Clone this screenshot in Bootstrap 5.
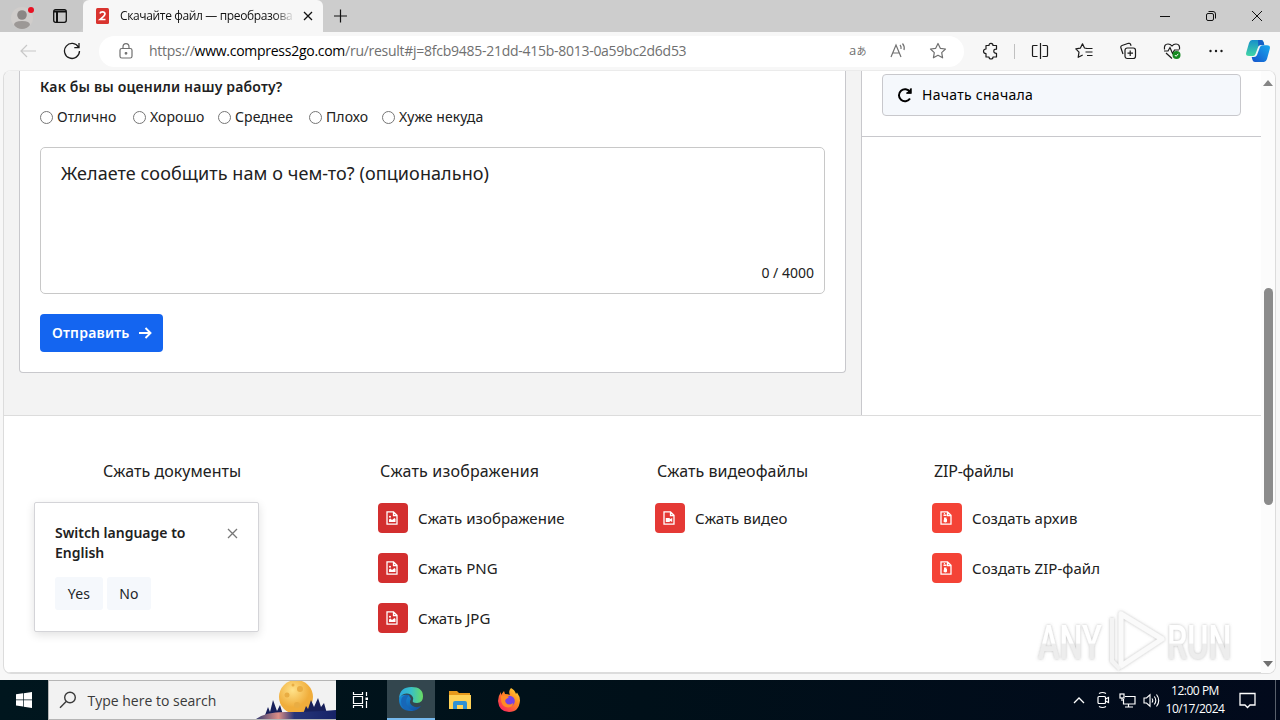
<!DOCTYPE html>
<html lang="ru">
  <head>
    <meta charset="UTF-8" />
    <meta name="viewport" content="width=device-width, initial-scale=1.0" />
    <title>Скачайте файл — преобразование</title>
    <link
      href="https://cdn.jsdelivr.net/npm/bootstrap@5.3.2/dist/css/bootstrap.min.css"
      rel="stylesheet" />
    <style>
      body {
        width: 1280px;
        height: 720px;
        overflow: hidden;
        font-family: "Noto Sans", "Open Sans", sans-serif;
        font-size: 14px;
        line-height: 20px;
        color: #212121;
        background: #f7f7f7;
      }
      svg { display: block; flex: none; }
      svg:not([fill]) { fill: none; }
      svg:not([stroke]) { stroke: currentColor; }
      .ui-font {
        font-family: "Open Sans", "Noto Sans", sans-serif;
      }
      .cell {
        display: flex;
        align-items: center;
        justify-content: center;
        flex: none;
      }
      .cell-44 { width: 44px; }
      .cell-46 { width: 46px; }
      .cell-40 { width: 40px; }
      .cell-24 { width: 24px; }

      /* browser frame */
      .tab-strip { height: 32px; background: #cdcdcd; color: #111; }
      .strip-left {
        width: 83px;
        background: #c8c8c8;
        border-bottom-right-radius: 6px;
      }
      .strip-tab {
        width: 240px;
        background: #f7f7f7;
        border-radius: 6px 6px 0 0;
        padding-left: 13px;
      }
      .tab-title {
        width: 175px;
        margin-left: 11px;
        font-size: 12px;
        letter-spacing: -0.36px;
        -webkit-mask-image: linear-gradient(90deg, #000 88%, transparent 100%);
        mask-image: linear-gradient(90deg, #000 88%, transparent 100%);
      }
      .tool-bar { height: 38px; padding-left: 6px; color: #1b1b1b; }
      .address {
        width: 865px;
        height: 31px;
        margin-left: 5px;
        border-radius: 16px;
        background: #fff;
        color: #707070;
        padding-left: 18px;
        padding-right: 6px;
      }
      .address-url { font-size: 14px; margin-left: 14px; letter-spacing: -0.27px; }
      .address-url b { font-weight: 400; color: #000; }
      .viewport {
        width: 1273px;
        height: 604px;
        margin-left: 3px;
        border: 1px solid #dcdcdc;
        border-top-color: #ebebeb;
        border-radius: 8px;
        background: #fff;
        overflow: hidden;
      }

      /* page */
      .page { width: 1257px; }
      .page-top { height: 345px; background: #f3f3f3; border-bottom: 1px solid #dcdcdc; }
      .main-col { width: 857px; padding-left: 15px; }
      .survey {
        width: 827px;
        height: 302px;
        padding: 6px 20px 0;
        background: #fff;
        border: 1px solid #c8c8cc;
        border-top: 0;
        border-radius: 0 0 4px 4px;
      }
      .survey-title { font-weight: 600; letter-spacing: 0.17px; }
      .survey-options { margin-top: 10px; letter-spacing: 0.08px; }
      .survey-options label { display: flex; align-items: center; gap: 4px; }
      .survey-options input { width: 13px; height: 13px; margin: 0; }
      .comment-box {
        width: 785px;
        height: 147px;
        margin-top: 20px;
        padding: 12px 10px 10px 20px;
        border: 1px solid #c8c8c8;
        border-radius: 5px;
      }
      .comment-hint { font-size: 18px; line-height: 26px; letter-spacing: 0.08px; }
      .btn-send {
        width: 123px;
        height: 38px;
        margin-top: 20px;
        padding: 0 11px 1px 12px;
        border-radius: 4px;
        background: #1465f0;
        color: #fff;
        font-size: 14px;
        font-weight: 600;
        letter-spacing: 0.22px;
      }
      .side-col { width: 400px; background: #fff; border-left: 1px solid #c8c8cc; }
      .side-head { height: 66px; padding: 3px 20px 0; border-bottom: 1px solid #c8c8cc; }
      .btn-restart {
        width: 359px;
        height: 42px;
        padding: 0 0 1px 14px;
        gap: 9px;
        border: 1px solid #c8c8cc;
        border-radius: 4px;
        background: #f5f8fc;
        color: #000;
        font-size: 14px;
        letter-spacing: 0.28px;
      }
      .page-links { height: 257px; padding: 43px 0 0 97px; border-bottom: 1px solid #dcdcdc; }
      .links-col { width: 277px; font-size: 15px; letter-spacing: 0.05px; }
      .links-title { font-size: 16px; line-height: 24px; padding-left: 2px; margin-bottom: 20px; }
      .links-item { height: 30px; margin-bottom: 20px; gap: 10px; }
      .tool-icon { width: 30px; height: 30px; padding: 0 2px 0 0; border-radius: 4px; color: #fff; }
      .red-1 { background: #d32f2f; }
      .red-2 { background: #e53935; }
      .red-3 { background: #f44336; }
      .scroll-track { width: 14px; background: #fcfcfc; padding: 9px 0 6px; }
      .scroll-thumb { width: 9px; height: 217px; margin-top: 202px; border-radius: 5px; background: #8b8b8b; }

      /* popup laid over the page */
      .lang-popup {
        position: absolute;
        left: 34px;
        top: 502px;
        width: 225px;
        height: 130px;
        padding: 20px;
        background: #fff;
        border: 1px solid #d4d4d8;
        border-radius: 2px;
        box-shadow: 0 3px 10px rgba(0, 0, 0, 0.12);
      }
      .lang-popup .btn {
        height: 33px;
        padding: 0;
        border: 0;
        border-radius: 3px;
        background: #f5f8fc;
        font-size: 14px;
        letter-spacing: 0.3px;
      }
      .watermark {
        position: absolute;
        left: 1030px;
        top: 604px;
      }

      /* taskbar */
      .task-bar {
        height: 40px;
        margin-top: 6px;
        background: linear-gradient(90deg, #00161e, #001019 50%, #020a1c);
        color: #fff;
      }
      .task-search {
        width: 288px;
        background: #f2f2f2;
        border: 1px solid #b5b5b5;
        border-width: 1px 0 1px 1px;
        color: #3a3a3a;
        padding-left: 10px;
      }
      .task-search span { font-size: 14px; margin: 2px 0 0 10.5px; white-space: nowrap; }
      .task-active { background: #33464e; border-bottom: 2px solid #76b9ed; }
      .clock { width: 62px; font-size: 12px; line-height: 18px; letter-spacing: -0.48px; }
    </style>
  </head>
  <body>
    <div class="tab-strip d-flex ui-font">
      <div class="strip-left d-flex align-items-center">
        <div class="cell cell-44">
          <svg width="26" height="28" viewBox="0 0 26 28" stroke="none">
            <circle cx="13" cy="16" r="11" fill="#d0cdcb" />
            <circle cx="13" cy="13" r="4.8" fill="#8b8785" />
            <path d="M5 23q0-4 8-4t8 4q-3 4-8 4t-8-4z" fill="#9c9896" />
            <circle cx="22" cy="8" r="3" fill="#e81123" />
          </svg>
        </div>
        <svg class="ms-2" width="16" height="16" viewBox="0 0 16 16" stroke-width="1.3">
          <rect x="1.7" y="1.7" width="12.6" height="12.6" rx="2" />
          <path d="M2 3.5h12M5 4v10" stroke-width="2" />
        </svg>
      </div>
      <div class="strip-tab d-flex align-items-center">
        <svg width="13" height="16" viewBox="0 0 13 16" stroke="none">
          <rect width="13" height="16" rx="1.5" fill="#d9342f" />
          <path d="M4 5.5Q4.300 3.800 6.500 3.800T9 5.800Q9 7.500 4.200 11.500H9.500" fill="none" stroke="#fff" stroke-width="1.700" />
        </svg>
        <div class="tab-title text-nowrap">Скачайте файл — преобразова</div>
        <svg style="margin-left: 8px" width="10" height="10" viewBox="0 0 10 10" stroke-width="1.300">
          <path d="M1 1l8 8M9 1L1 9" />
        </svg>
      </div>
      <svg class="align-self-center ms-2 me-auto" width="18" height="18" viewBox="0 0 18 18" stroke-width="1.200">
        <path d="M9.500 2.500v13M3 9h13" />
      </svg>
      <div class="cell cell-46"><svg width="12" height="12" viewBox="0 0 12 12"><path d="M1 6.500h10" /></svg></div>
      <div class="cell cell-46">
        <svg width="12" height="12" viewBox="0 0 12 12">
          <rect x="1.500" y="3.500" width="7" height="7" rx="1.500" />
          <path d="M3.500 1.500H8q2.500 0 2.500 2.500v4.500" />
        </svg>
      </div>
      <div class="cell cell-46"><svg width="12" height="12" viewBox="0 0 12 12"><path d="M1 1l10 10M11 1L1 11" /></svg></div>
    </div>

    <div class="tool-bar d-flex align-items-center ui-font">
      <div class="cell cell-44">
        <svg width="18" height="14" viewBox="0 0 18 14" stroke="#c8c8c8" stroke-width="1.200"><path d="M17 7H2M8 1L2 7l6 6" /></svg>
      </div>
      <div class="cell cell-44">
        <svg width="18" height="18" viewBox="0 0 18 18" stroke-width="1.300"><path d="M15.500 5.200A7.500 7.500 0 1 0 16.500 9M16 1v4.700h-4.700" /></svg>
      </div>
      <div class="address d-flex align-items-center">
        <svg width="18" height="18" viewBox="0 0 18 18" stroke-width="1.200">
          <rect x="3" y="6.500" width="12" height="9.500" rx="1.800" />
          <path d="M6 6.500V5a3 3.400 0 0 1 6 0v1.500" />
          <circle cx="9" cy="11.300" r=".8" fill="currentColor" />
        </svg>
        <div class="address-url text-nowrap me-auto">https://<b>www.compress2go.com</b>/ru/result#j=8fcb9485-21dd-415b-8013-0a59bc2d6d53</div>
        <div class="cell cell-40">
          <svg width="20" height="18" viewBox="0 0 20 18" stroke="none">
            <text x="1" y="13" font-size="13" font-family="Open Sans" fill="#707070">a</text>
            <text x="8.500" y="13" font-size="10" font-family="Noto Sans CJK JP" fill="#707070">あ</text>
          </svg>
        </div>
        <div class="cell cell-40">
          <svg width="18" height="18" viewBox="0 0 18 18" stroke-width="1.200"><path d="M2 15L7 3l5 12M3.800 11h6.400M11 3q1.500 1.500 1 4M13.500 1.500q2.500 3 1.500 6.500" /></svg>
        </div>
        <div class="cell cell-40">
          <svg width="18" height="18" viewBox="0 0 18 18" stroke-width="1.200" stroke-linejoin="round"><path d="M9 1.500l2.300 4.800 5.200.7-3.800 3.600.9 5.200L9 13.300l-4.600 2.500.9-5.200L1.500 7l5.200-.7z" /></svg>
        </div>
      </div>
      <div class="cell cell-44" style="margin-left: 5px">
        <svg width="18" height="18" viewBox="0 0 18 18" stroke-width="1.200" stroke-linejoin="round">
          <path d="M4 3.500h3q0-2.200 2-2.200t2 2.200h3.500v3.700q-2.700-.2-2.700 2t2.700 2.100V15H11q0 2-2 2t-2-2H4v-3.500q-2.500 0-2.500-2.200T4 7z" />
        </svg>
      </div>
      <div class="vr my-auto" style="height: 15px; margin-left: 1px"></div>
      <div class="cell cell-44" style="margin-left: 3px">
        <svg width="18" height="18" viewBox="0 0 18 18" stroke-width="1.200"><path d="M6.500 3.500h-4q-1 0-1 1v9q0 1 1 1h4M11.500 3.500h4q1 0 1 1v9q0 1-1 1h-4M9.500 1v16" /></svg>
      </div>
      <div class="cell cell-44">
        <svg width="18" height="18" viewBox="0 0 18 18" stroke-width="1.200" stroke-linejoin="round"><path d="M11.500 6.300L9.500 6 7.500 1.800 5.300 6.200l-4.500.6 3.200 3.300-.8 5.200 4.500-2.300M11 6.500h6.500M10.500 10h7M12 13.500h5.500" /></svg>
      </div>
      <div class="cell cell-44">
        <svg width="18" height="18" viewBox="0 0 18 18" stroke-width="1.200">
          <rect x="6" y="6" width="10.500" height="10.500" rx="2.200" />
          <path d="M11.200 8.500v5.500M8.500 11.200H14M4 12L1.800 5.500Q1.500 4 3 3.500L9.500 1.300q1.500-.3 2 1l.6 1.500" />
        </svg>
      </div>
      <div class="cell cell-44">
        <svg width="18" height="18" viewBox="0 0 18 18" stroke-width="1.200">
          <path d="M1.500 7.500Q.8 2 5 2q2.500 0 4 2 1.500-2 4-2 4.200 0 3.500 5.500M1 9h4l2-3.500 2.500 6L11.500 8H16M3 11l6 5.500" />
          <circle cx="13.500" cy="13" r="4" fill="#168a22" stroke="none" />
          <path d="M11.800 13l1.300 1.300 2.200-2.500" stroke="#fff" stroke-width="1" />
        </svg>
      </div>
      <div class="cell cell-44">
        <svg width="16" height="4" viewBox="0 0 16 4" fill="#1b1b1b" stroke="none"><circle cx="2.500" cy="2" r="1.200" /><circle cx="8" cy="2" r="1.200" /><circle cx="13.500" cy="2" r="1.200" /></svg>
      </div>
      <div class="cell cell-40">
        <svg width="24" height="24" viewBox="0 0 24 24" stroke="none">
          <defs>
            <linearGradient id="copA" x1="0" y1="0" x2="0" y2="1"><stop stop-color="#168fca" /><stop offset="1" stop-color="#42d6a5" /></linearGradient>
            <linearGradient id="copB" x1="1" y1="0" x2="0" y2="1"><stop stop-color="#17a9ee" /><stop offset="1" stop-color="#1553cc" /></linearGradient>
          </defs>
          <path d="M6 1h9q2 0 2.500 2l.7 2.500H15q-2 0-2.700 2L9.500 15q-.7 2-2.500 2H3q-4 0-2.600-4L3 4q1-3 3-3z" fill="url(#copA)" />
          <path d="M18 23H9q-2 0-2.500-2l-.8-3H8q2.300 0 3-2L14 8q.7-1.800 2.500-1.800H21q4 0 2.600 4.200L21 20q-1 3-3 3z" fill="url(#copB)" />
          <path d="M12 1h3q2 0 2.500 2l.8 3H15q-2 0-2.700 1.500z" fill="#155fc5" />
        </svg>
      </div>
    </div>

    <div class="viewport d-flex">
      <div class="page flex-shrink-0">
        <div class="page-top d-flex">
          <div class="main-col">
            <form class="survey">
              <div class="survey-title">Как бы вы оценили нашу работу?</div>
              <div class="survey-options d-flex">
                <label style="width: 93px"><input type="radio" name="rate" />Отлично</label>
                <label style="width: 85px"><input type="radio" name="rate" />Хорошо</label>
                <label style="width: 91px"><input type="radio" name="rate" />Среднее</label>
                <label style="width: 73px"><input type="radio" name="rate" />Плохо</label>
                <label><input type="radio" name="rate" />Хуже некуда</label>
              </div>
              <div class="comment-box d-flex flex-column justify-content-between">
                <div class="comment-hint">Желаете сообщить нам о чем-то? (опционально)</div>
                <div class="text-end">0 / 4000</div>
              </div>
              <button type="button" class="btn btn-send d-flex align-items-center justify-content-between border-0">
                Отправить
                <svg width="14" height="14" viewBox="0 0 14 14" stroke-width="1.900"><path d="M1 7h11M7.500 2l5 5-5 5" /></svg>
              </button>
            </form>
          </div>
          <div class="side-col">
            <div class="side-head">
              <button type="button" class="btn btn-restart d-flex align-items-center">
                <svg width="16" height="16" viewBox="0 0 16 16" stroke-width="2"><path d="M13 5A6 6 0 1 0 13 11.500" /><path d="M14.500 1v5.500H9z" fill="currentColor" stroke="none" /><path d="M13.700 1.500v4.500H9.500" stroke-width="1.600" /></svg>
                Начать сначала
              </button>
            </div>
          </div>
        </div>
        <div class="page-links d-flex">
          <div class="links-col">
            <div class="links-title">Сжать документы</div>
          </div>
          <div class="links-col">
            <div class="links-title" style="letter-spacing: 0.2px">Сжать изображения</div>
            <div class="links-item d-flex align-items-center">
              <span class="tool-icon cell red-1"><svg width="12" height="14" viewBox="0 0 12 14"><use href="#fileImage" /></svg></span>Сжать изображение
            </div>
            <div class="links-item d-flex align-items-center">
              <span class="tool-icon cell red-1"><svg width="12" height="14" viewBox="0 0 12 14"><use href="#fileImage" /></svg></span>Сжать PNG
            </div>
            <div class="links-item d-flex align-items-center">
              <span class="tool-icon cell red-1"><svg width="12" height="14" viewBox="0 0 12 14"><use href="#fileImage" /></svg></span>Сжать JPG
            </div>
          </div>
          <div class="links-col">
            <div class="links-title">Сжать видеофайлы</div>
            <div class="links-item d-flex align-items-center">
              <span class="tool-icon cell red-2"><svg width="12" height="14" viewBox="0 0 12 14"><use href="#fileVideo" /></svg></span>Сжать видео
            </div>
          </div>
          <div class="links-col">
            <div class="links-title" style="letter-spacing: -0.2px">ZIP-файлы</div>
            <div class="links-item d-flex align-items-center">
              <span class="tool-icon cell red-3"><svg width="12" height="14" viewBox="0 0 12 14"><use href="#fileZip" /></svg></span>Создать архив
            </div>
            <div class="links-item d-flex align-items-center">
              <span class="tool-icon cell red-3"><svg width="12" height="14" viewBox="0 0 12 14"><use href="#fileZip" /></svg></span>Создать ZIP-файл
            </div>
          </div>
        </div>
      </div>
      <div class="scroll-track d-flex flex-column align-items-center">
        <svg width="10" height="6" viewBox="0 0 10 6" stroke="none"><path d="M0 6l5-6 5 6z" fill="#858585" /></svg>
        <div class="scroll-thumb"></div>
        <svg class="mt-auto" width="10" height="6" viewBox="0 0 10 6" stroke="none"><path d="M0 0l5 6 5-6z" fill="#707070" /></svg>
      </div>
    </div>

    <div class="lang-popup">
      <div class="d-flex justify-content-between">
        <div class="fw-semibold" style="width: 145px">Switch language to English</div>
        <svg style="margin-top: 5px" width="11" height="11" viewBox="0 0 11 11" stroke="#777" stroke-width="1.300"><path d="M1 1l9 9M10 1l-9 9" /></svg>
      </div>
      <div class="d-flex gap-1" style="margin-top: 14px">
        <button type="button" class="btn" style="width: 48px">Yes</button>
        <button type="button" class="btn" style="width: 44px">No</button>
      </div>
    </div>

    <svg class="watermark" width="230" height="74" viewBox="0 0 230 74" stroke="none">
      <defs>
        <filter id="wmShadow" x="-10%" y="-10%" width="120%" height="120%"><feDropShadow dx="0" dy="0" stdDeviation="1.500" flood-color="#777" flood-opacity=".5" /></filter>
        <linearGradient id="wmFill" x1="0" y1="0" x2="0" y2="1"><stop offset=".52" stop-color="#fff" /><stop offset=".54" stop-color="#ededed" /></linearGradient>
      </defs>
      <g filter="url(#wmShadow)">
        <g font-family="Roboto" font-size="49" font-weight="500" fill="url(#wmFill)">
          <text transform="translate(8 55) scale(.66 1)">ANY</text>
          <text transform="translate(137 55) scale(.66 1)">RUN</text>
        </g>
        <path d="M91 10v52l41-27z" fill="none" stroke="#fafafa" stroke-width="5" stroke-linejoin="round" />
        <path d="M82 14v43l8 8" fill="none" stroke="#f4f4f4" stroke-width="4" />
      </g>
    </svg>

    <div class="task-bar d-flex ui-font">
      <div class="cell" style="width: 48px">
        <svg width="16" height="16" viewBox="0 0 16 16" stroke="none"><path d="M0 2.300l7-1v6.300H0zM7.700 1.200L16 0v7.600H7.700zM0 8.300h7v6.300l-7-1zM7.700 8.300H16V16l-8.300-1.200z" fill="#fff" /></svg>
      </div>
      <div class="task-search d-flex align-items-center">
        <svg width="18" height="18" viewBox="0 0 18 18" stroke-width="1.400"><circle cx="11" cy="6.500" r="5.300" /><path d="M7.200 10.500L1 16.800" /></svg>
        <span class="me-auto">Type here to search</span>
        <svg width="80" height="38" viewBox="0 0 80 38" stroke="none">
          <defs>
            <linearGradient id="hillFill"><stop stop-color="#343c72" /><stop offset=".28" stop-color="#dd8e86" /><stop offset=".48" stop-color="#263579" /><stop offset="1" stop-color="#172367" /></linearGradient>
            <radialGradient id="moonFill" cx=".4" cy=".3"><stop stop-color="#ffe28a" /><stop offset="1" stop-color="#f0ad3b" /></radialGradient>
          </defs>
          <circle cx="40" cy="16" r="17" fill="url(#moonFill)" />
          <g fill="#e9ad43"><circle cx="31" cy="14" r="2.500" /><circle cx="44" cy="8" r="3" /><circle cx="37" cy="4" r="1.500" /><circle cx="41" cy="24" r="3" /></g>
          <path d="M8 37l4-11 2 5 3-12 4 11 3-6 4 13zM46 36l4-11 2 3 3-9 3 7 4-9 3 9 3-4 4 14z" fill="#18205a" />
          <path d="M0 38q10-8 34-7 20 0 46-2v9z" fill="url(#hillFill)" />
        </svg>
      </div>
      <div class="cell" style="width: 51px; padding-right: 2px">
        <svg width="17" height="16" viewBox="0 0 17 16" stroke-width="1.200"><path d="M1.500 0v2.500h9V0M1.500 16v-2.500h9V16M1.500 4.500h9v7h-9zM14.500 0v4M14.500 9v7" /><rect x="13.500" y="5.500" width="2.500" height="2.500" fill="#fff" stroke="none" /></svg>
      </div>
      <div class="cell task-active" style="width: 48px">
        <svg width="24" height="24" viewBox="0 0 24 24" stroke="none">
          <defs>
            <linearGradient id="edgeTop"><stop stop-color="#2aa9e0" /><stop offset=".5" stop-color="#38bfc7" /><stop offset="1" stop-color="#69dc62" /></linearGradient>
            <linearGradient id="edgeLow" x1="0" y1="0" x2="1" y2="1"><stop stop-color="#1793dc" /><stop offset="1" stop-color="#12499b" /></linearGradient>
          </defs>
          <path d="M0 12Q0 24 12 24q6.500 0 10-5-5 2.500-9-.500-3.500-3-1-6.500-2-5-7-4Q0 8.500 0 12z" fill="url(#edgeLow)" />
          <path d="M0 11Q1 0 12.500 0 24 0 24 9.500q0 6.500-6 6.500-5.500 0-4-3Q15 10 11.500 7.500 5.500 4.500 0 11z" fill="url(#edgeTop)" />
          <path d="M11 8q-5 3-3.500 9 1.500 5.500 7 6.700Q7 25 2.800 18.500.5 11 5.500 8.500 8 7.200 11 8z" fill="#1767b7" />
        </svg>
      </div>
      <div class="cell" style="width: 49px">
        <svg width="22" height="20" viewBox="0 0 22 20" stroke="none">
          <path d="M0 1h8l2 2h11v5H0z" fill="#e79a1c" /><path d="M0 5h22v14H0z" fill="#ffd257" />
          <path d="M4 19v-6q0-2 2-2h10q2 0 2 2v6h-4v-4H8v4z" fill="#2f91d5" />
        </svg>
      </div>
      <div class="cell" style="width: 49px">
        <svg width="24" height="24" viewBox="0 0 24 24" stroke="none">
          <defs><linearGradient id="foxFill" x1="1" y1="0" x2=".2" y2="1"><stop stop-color="#ffe63b" /><stop offset=".45" stop-color="#ff8a20" /><stop offset="1" stop-color="#f9235f" /></linearGradient></defs>
          <path d="M14 0q4 2 5 6l1-1.500q3 4 3 8Q22 24 12 24T1 13q0-5 3-9v3l3-4 1 3q3 0 5 1-2-4 1-7z" fill="url(#foxFill)" />
          <circle cx="12.500" cy="13" r="5.300" fill="#7542e5" />
          <path d="M4 8q5-2 8 1l-2 1.500Q7 12 9 15q3 3 7 0 0 4-5 4.500Q3 19 4 8z" fill="#ff8b25" />
        </svg>
      </div>
      <div class="d-flex ms-auto">
        <div class="cell cell-24"><svg width="12" height="8" viewBox="0 0 12 8" stroke-width="1.300"><path d="M1 7l5-5 5 5" /></svg></div>
        <div class="cell cell-24"><svg width="14" height="18" viewBox="0 0 14 18" stroke-width="1.200"><rect x="2" y="5.500" width="7.500" height="7" rx="1" /><path d="M9.500 8l3-1.500v5l-3-1.500M3 2.500Q6.500.500 10 2.500M3 15.500q3.500 2 7 0" /></svg></div>
        <div class="cell cell-24"><svg width="17" height="15" viewBox="0 0 17 15" stroke-width="1.200"><path d="M6 3.500h10v7.500H4.500V6M9.500 11v3M6 14h8" /><rect x="1" y="1" width="4" height="4" /><path d="M3 5v3" /></svg></div>
        <div class="cell cell-24"><svg width="17" height="15" viewBox="0 0 17 15" stroke-width="1.100"><path d="M1 5h2.500L7 1.800v11.400L3.500 10H1zM9 5.500q1.500 2 0 4M11.300 3.500q3 4 0 8M13.500 1.500q4.500 6 0 12" /></svg></div>
        <div class="clock text-center" style="margin-left: 1px; padding-top: 2px">12:00 PM<br />10/17/2024</div>
        <div class="cell" style="width: 42px"><svg width="17" height="17" viewBox="0 0 17 17" stroke-width="1.300"><path d="M1 1.500h15v11.500h-5l-2.500 2.500L6 13H1z" /></svg></div>
        <div style="width: 5px; margin-left: 7px; border-left: 1px solid #59606c"></div>
      </div>
    </div>

    <!-- file icons shared by the tool links -->
    <svg width="0" height="0">
      <defs>
        <g id="fileImage"><path d="M1 .800h6.500L11 4.200v9H1zM7.500 1v3.500H11" stroke-width="1.300" /><path d="M3 11V8.500l1.500-1L6 9l2.500-2L9.500 8v3z" fill="#fff" stroke="none" /><circle cx="4" cy="5.800" r="1" fill="#fff" stroke="none" /></g>
        <g id="fileVideo"><path d="M1 .800h6.500L11 4.200v9H1zM7.500 1v3.500H11" stroke-width="1.300" /><path d="M2.800 7h4v1.200L9.200 7v4L6.800 9.800V11h-4z" fill="#fff" stroke="none" /></g>
        <g id="fileZip"><path d="M1 .800h6.500L11 4.200v9H1zM7.500 1v3.500H11" stroke-width="1.300" /><path d="M3.500 2H5v1.500h1.500V5H5v1.500h1.500V8H7v2.500q-.5 1-1.500 1t-2-1L4 8V6.500h1V5H3.500V3.500H5" fill="#fff" stroke="none" /></g>
      </defs>
    </svg>
    <script src="https://cdn.jsdelivr.net/npm/bootstrap@5.3.2/dist/js/bootstrap.bundle.min.js"></script>
  </body>
</html>
